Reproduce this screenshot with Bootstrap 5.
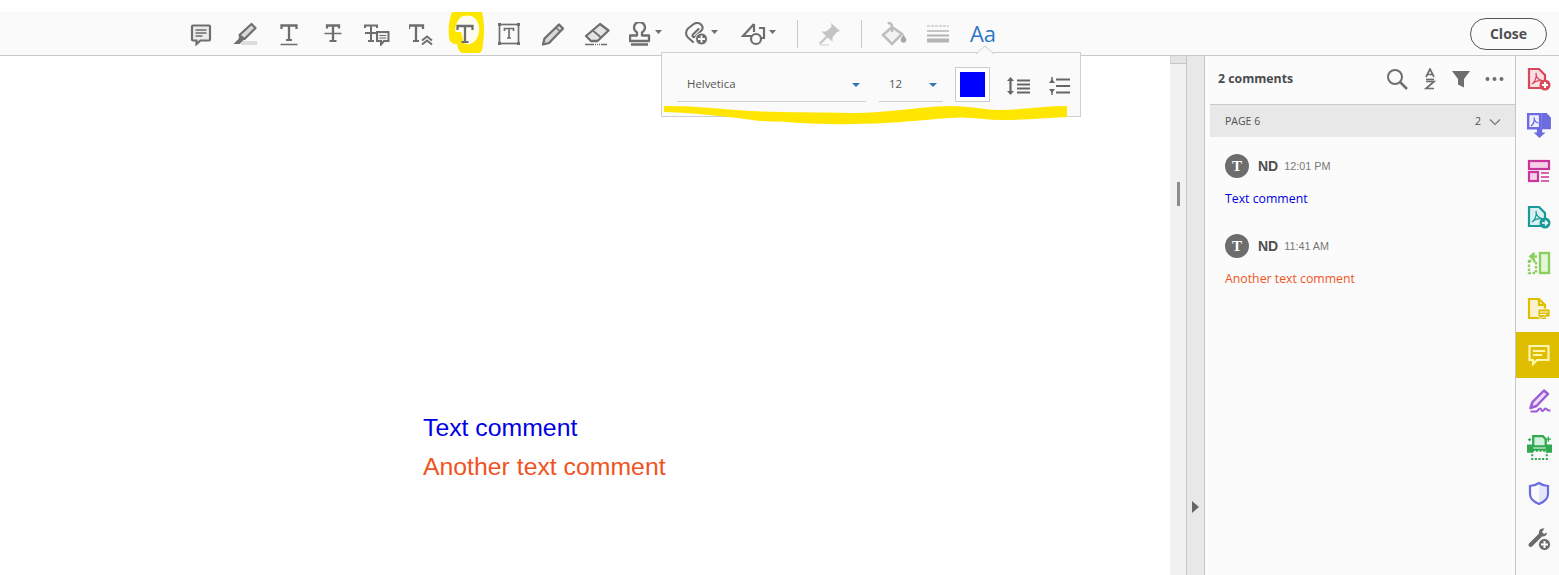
<!doctype html>
<html lang="en">
<head>
<meta charset="utf-8">
<title>Comments</title>
<link href="https://cdn.jsdelivr.net/npm/bootstrap@5.3.0/dist/css/bootstrap.min.css" rel="stylesheet">
<style>
html,body{height:575px;overflow:hidden;background:#fff}
body{font-family:"Open Sans","Noto Sans",sans-serif;color:#505050;position:relative}
.top-strip{height:12px;background:#fff}
.tool-bar{height:44px;background:#fafafa;border-bottom:1px solid #c9c9c9;padding-left:179px}
.tool-btn{width:44px;height:43px;flex:none}
.tool-wide{height:43px;flex:none;padding-left:10px}
.w-stamp{width:56px}.w-clip{width:60px}.w-shape{width:50px;padding-left:6px}
.tool-sep{width:1px;height:28px;background:#c9c9c9;flex:none}
.sp-a{width:12px;flex:none}.sp-b{width:9px;flex:none}.sp-c{width:10px;flex:none}
.tool-aa{font-size:22px;line-height:1;color:#2f77c4;font-weight:500;font-family:"Open Sans",sans-serif;width:44px;text-align:center;flex:none;padding-left:2px;margin-top:-1px}
.close-btn{--bs-btn-padding-y:0;--bs-btn-padding-x:0;width:77px;height:32px;border:1px solid #555;border-radius:16px;background:#fbfbfb;color:#505050;font-weight:700;font-size:14px;line-height:28px;margin-right:12px}
.work-area{height:519px}
.doc-page{width:1170px;flex:none;background:#fff;padding:352px 0 0 423px;font-family:"Liberation Sans",Arial,sans-serif;font-size:24.8px;line-height:39px}
.ink-blue{color:#0000e6}.ink-orange{color:#f0541e}
.scroll-col{width:17px;flex:none;background:#f1f1f1;border-right:1px solid #c6c6c6}
.scroll-cap{height:8px;background:#e4e4e4;border-bottom:1px solid #c6c6c6;border-left:1px solid #d4d4d4}
.grip{width:3px;height:24px;background:#8c8c8c;margin:118px 0 0 7px}
.split-col{width:18px;flex:none;background:#e8e8e8;border-right:1px solid #c6c6c6;padding-top:445px;padding-left:5px}
.split-arrow{width:0;height:0;border-left:7px solid #666;border-top:6px solid transparent;border-bottom:6px solid transparent}
.side-panel{width:311px;flex:none;background:#fbfbfb;border-right:1px solid #c6c6c6}
.panel-head{height:48px;padding:0 11px 2px 13px}
.panel-title{font-weight:700;font-size:12.3px;color:#4b4b4b}
.head-tools{gap:15px}
.page-band{height:33px;margin-left:5px;background:#e8e8e8;border-top:1px solid #c9c9c9;padding:1px 14px 0 15px;font-size:10.5px;color:#505050}
.note{padding:17px 0 0 20px;height:80px}
.note-ava{width:24px;height:24px;border-radius:50%;background:#6d6d6d;color:#fff;font-family:"Liberation Serif",serif;font-weight:700;font-size:15px;line-height:24px;text-align:center;flex:none}
.note-name{font-family:"Liberation Sans",sans-serif;font-weight:700;font-size:14px;color:#4f4f4f;margin-left:9px}
.note-time{font-family:"Liberation Sans",sans-serif;font-size:10.8px;color:#777;margin-left:6px}
.note-body{font-size:12.3px;line-height:16px;margin-top:13px}
.rail{width:43px;flex:none;background:#fafafa}
.rail-item{height:46px;padding-left:3px}
.rail-on{background:#dfbd00}
.fmt-pop{position:absolute;left:661px;top:52px;width:420px;height:65px;background:#fafafa;border:1px solid #cfcfcf;padding:14px 0 0 15px}
.fmt-notch{position:absolute;left:313px;top:-8px}
.fmt-sel{height:35px;border-bottom:1px solid #cfcfcf;font-size:11.4px;color:#555;padding-left:10px;flex:none}
.sel-a{width:189px;margin-right:13px}.sel-b{width:64px;margin-right:12px}
.sel-caret{width:0;height:0;border-top:4px solid #2f77b4;border-left:4px solid transparent;border-right:4px solid transparent;margin-right:6px;margin-top:2px}
.swatch{width:35px;height:35px;border:1px solid #ccc;padding:4px;flex:none;background:#fff}
.swatch-in{width:100%;height:100%;background:#0000ff}
.fmt-i1{margin:9px 0 0 17px}.fmt-i2{margin:9px 0 0 19px}
.scribble{position:absolute;left:0;top:0;pointer-events:none}
.blob{position:absolute;left:6px;top:0;overflow:visible}
.ic{display:block;flex:none}
</style>
</head>
<body>
<div class="top-strip"></div>
<div class="tool-bar d-flex align-items-center">
  <div class="tool-btn d-flex align-items-center justify-content-center"><svg class="ic" width="24" height="24" viewBox="0 0 24 24" fill="none" stroke="#6e6e6e" stroke-width="2.200"><path d="M4 3.500h16a1 1 0 0 1 1 1v13a1 1 0 0 1-1 1H11.500L7.500 22v-3.500H4a1 1 0 0 1-1-1v-13a1 1 0 0 1 1-1z" fill="#ececec"/><path d="M6.500 8h11M6.500 11h11M6.500 14h7" stroke-width="1.500"/></svg></div>
  <div class="tool-btn d-flex align-items-center justify-content-center"><svg class="ic" width="24" height="24" viewBox="0 0 24 24" fill="none"><rect x="8" y="19" width="16" height="4" fill="#dcdcdc"/><path d="M18.500 2l4 4-11 11-5-4z" fill="#d8d8d8" stroke="#6e6e6e" stroke-width="2.200" stroke-linejoin="round"/><path d="M6.500 13l-1 4-5 5h6l5-5z" fill="#6e6e6e"/></svg></div>
  <div class="tool-btn d-flex align-items-center justify-content-center"><svg class="ic" width="24" height="24" viewBox="0 0 24 24" fill="none" stroke="#6e6e6e" stroke-width="2"><path d="M4.500 7V3.500h15V7M12 3.500V18" stroke-width="2.300"/><path d="M9 18h6" stroke-width="2"/><path d="M3.500 22.500h17" stroke-width="1.500"/></svg></div>
  <div class="tool-btn d-flex align-items-center justify-content-center"><svg class="ic" width="24" height="24" viewBox="0 0 24 24" fill="none" stroke="#6e6e6e" stroke-width="2"><path d="M6 6.500V3.500h12v3M12 3.500V19" stroke-width="2.300"/><path d="M8.500 19h7" stroke-width="2"/><path d="M3.500 11.500h17" stroke-width="1.500"/></svg></div>
  <div class="tool-btn d-flex align-items-center justify-content-center"><svg class="ic" width="26" height="24" viewBox="0 0 26 24" fill="none" stroke="#6e6e6e" stroke-width="2"><path d="M1 6V3.500h12V6M7 3.500V19M4 19h6M1 11h11" stroke-width="2"/><path d="M13 10h11.500v9h-4.500l-3 3.500V19h-4z" fill="#ececec" stroke-width="2"/><path d="M15.500 13.500h6.500M15.500 16h6.500" stroke-width="1.200"/></svg></div>
  <div class="tool-btn d-flex align-items-center justify-content-center"><svg class="ic" width="24" height="24" viewBox="0 0 24 24" fill="none" stroke="#6e6e6e" stroke-width="2"><path d="M0 7V3.500h14V7M7 3.500V19" stroke-width="2.300"/><path d="M4 19h6" stroke-width="2"/><path d="M13 18.500l5-4 5 4M13 22.500l5-4 5 4" stroke-width="2"/></svg></div>
  <div class="tool-btn d-flex align-items-center justify-content-center position-relative"><svg class="blob" width="35" height="41" viewBox="0 0 35 41"><path d="M3 0H33C35 8 36 20 34 30C34 36 33 41 30 41H14C10 41 9 36 8 32C3 32 1 30 0 26C-1 16 0 8 3 0z" fill="#ffe600"/><path d="M14 4C22 2 28 5 30 14C31 20 29 26 26 29C22 33 18 33 15 31C13 27 14 24 12 20C8 20 6 20 6 18C7 12 9 6 14 4z" fill="#fdfcef"/></svg><svg class="ic position-relative" width="20" height="22" viewBox="0 0 20 22" fill="none" stroke="#6e6e6e" stroke-width="2"><path d="M2.500 7V3h15v4M10 3v16" stroke-width="2.300"/><path d="M6.500 19h7"/></svg></div>
  <div class="tool-btn d-flex align-items-center justify-content-center"><svg class="ic" width="24" height="24" viewBox="0 0 24 24" fill="none" stroke="#6e6e6e"><rect x="2.500" y="2.500" width="19" height="19" stroke-width="1.700"/><path d="M1 1h3v3H1zM20 1h3v3h-3zM1 20h3v3H1zM20 20h3v3h-3z" fill="#6e6e6e" stroke="none"/><path d="M7.500 9V6.500h9V9M12 6.500V16M10 16h4" stroke-width="1.700"/></svg></div>
  <div class="tool-btn d-flex align-items-center justify-content-center"><svg class="ic" width="24" height="24" viewBox="0 0 24 24" fill="none"><path d="M18 2.500l4 4L8 21l-6 1.500L3.500 16.500z" fill="#d8d8d8" stroke="#6e6e6e" stroke-width="2.300" stroke-linejoin="round"/><path d="M15 5.500l4 4" stroke="#6e6e6e" stroke-width="1.500"/></svg></div>
  <div class="tool-btn d-flex align-items-center justify-content-center"><svg class="ic" width="26" height="24" viewBox="0 0 26 24" fill="none"><path d="M16 2l8.500 6.500L13.500 19H7l-5-5z" fill="#e4e4e4" stroke="#6e6e6e" stroke-width="2.300" stroke-linejoin="round"/><path d="M8 8l8.500 7" stroke="#6e6e6e" stroke-width="1.800"/><path d="M1 22.500h22" stroke="#6e6e6e" stroke-dasharray="9 1 1 1 1 1 1 1" stroke-width="1.300"/></svg></div>
  <div class="tool-wide w-stamp d-flex align-items-center"><svg class="ic" width="34" height="24" viewBox="0 0 34 24" fill="none" stroke="#6e6e6e" stroke-width="2.300"><path d="M8 10.500C6 9 5 7.500 5 5.500a5.500 5.500 0 0 1 11 0c0 2-1 3.500-3 5V13.500h7V19H1v-5.500h7z" stroke-linejoin="round"/><path d="M2 22.500h17" stroke-width="2.500"/><path d="M26 8h7l-3.500 4z" fill="#6e6e6e" stroke="none"/></svg></div>
  <div class="tool-wide w-clip d-flex align-items-center"><svg class="ic" width="34" height="24" viewBox="0 0 34 24" fill="none" stroke="#6e6e6e" stroke-width="2.100"><path d="M8 20L3 15.500C0 12.500 1 8.500 3 6.500L8 2.500C11 .5 14 .5 16 2.500C18 4.500 18 7 16 9L10.500 14.500C8.500 16 6.500 14 8 12.500L13.500 7" stroke-linecap="round"/><circle cx="16.500" cy="17" r="6" fill="#6e6e6e" stroke="#fafafa" stroke-width="1"/><path d="M13 17h7M16.500 13.500v7" stroke="#fff" stroke-width="1.800"/><path d="M26 8h7l-3.500 4z" fill="#6e6e6e" stroke="none"/></svg></div>
  <div class="tool-wide w-shape d-flex align-items-center"><svg class="ic" width="36" height="24" viewBox="0 0 36 24" fill="none" stroke="#6e6e6e" stroke-width="2.200"><path d="M13 2L2 14h9M13 2v8M18 6h5v10h-3"/><circle cx="15" cy="17" r="5"/><path d="M28 8h7l-3.500 4z" fill="#6e6e6e" stroke="none"/></svg></div>
  <div class="sp-a"></div><div class="tool-sep"></div><div class="sp-b"></div>
  <div class="tool-btn d-flex align-items-center justify-content-center"><svg class="ic" width="24" height="24" viewBox="0 0 24 24"><path d="M14 1l9 8-3 1-4.500 5.500 0 4-5-4-7 7-1.500-1.500 7-7-4.500-4.500h4.500l5.500-4.500z" fill="#c4c4c4"/><path d="M3 23h9" stroke="#dcdcdc" stroke-width="1.500"/></svg></div>
  <div class="sp-c"></div><div class="tool-sep"></div><div class="sp-c"></div>
  <div class="tool-btn d-flex align-items-center justify-content-center"><svg class="ic" width="26" height="26" viewBox="0 0 26 26" fill="none" stroke="#bdbdbd" stroke-width="2.500"><path d="M11 6L2 14l9 9 10-10z" fill="#f3f3f3"/><path d="M7 3c3-3 5 2 4 8"/><circle cx="22.500" cy="19" r="2.800" fill="#a8a8a8" stroke="none"/><path d="M22.500 13.500l-2.600 4.500h5.200z" fill="#a8a8a8" stroke="none"/></svg></div>
  <div class="tool-btn d-flex align-items-center justify-content-center"><svg class="ic" width="22" height="18" viewBox="0 0 22 18" fill="none" stroke="#b4b4b4"><path d="M0 1h22" stroke-dasharray="3 1"/><path d="M0 6h22" stroke-width="1.500"/><path d="M0 10.500h22" stroke-width="2"/><path d="M0 15.500h22" stroke-width="4"/></svg></div>
  <div class="tool-aa">Aa</div>
  <button type="button" class="btn close-btn ms-auto">Close</button>
</div>
<div class="work-area d-flex">
  <div class="doc-page">
    <div class="ink-blue">Text comment</div>
    <div class="ink-orange">Another text comment</div>
  </div>
  <div class="scroll-col"><div class="scroll-cap"></div><div class="grip"></div></div>
  <div class="split-col"><div class="split-arrow"></div></div>
  <div class="side-panel d-flex flex-column">
    <div class="panel-head d-flex align-items-center">
      <span class="panel-title">2 comments</span>
      <div class="head-tools ms-auto d-flex align-items-center">
        <svg class="ic" width="22" height="22" viewBox="0 0 22 22" fill="none" stroke="#6e6e6e" stroke-width="2"><circle cx="9" cy="9" r="7"/><path d="M14 14l7 7" stroke-width="2.500"/></svg>
        <svg class="ic" width="14" height="22" viewBox="0 0 14 22" fill="none" stroke="#6e6e6e" stroke-width="1.700"><path d="M3 9l4-8 4 8M4.500 6.500h5"/><path d="M3 11.500h8"/><path d="M3 13.500h8L3 20.500h8"/></svg>
        <svg class="ic" width="18" height="18" viewBox="0 0 18 18"><path d="M0 1h18l-6 8v8.500l-6-3V9z" fill="#6e6e6e"/></svg>
        <svg class="ic" width="19" height="6" viewBox="0 0 19 6" fill="#6e6e6e"><circle cx="2.500" cy="3" r="2"/><circle cx="9.500" cy="3" r="2"/><circle cx="16.500" cy="3" r="2"/></svg>
      </div>
    </div>
    <div class="page-band d-flex align-items-center">
      <span>PAGE 6</span><span class="ms-auto">2</span>
      <svg class="ic ms-2" width="12" height="8" viewBox="0 0 12 8" fill="none" stroke="#777" stroke-width="1.200"><path d="M1 1.500l5 5 5-5"/></svg>
    </div>
    <div class="note">
      <div class="d-flex align-items-center"><div class="note-ava">T</div><span class="note-name">ND</span><span class="note-time">12:01 PM</span></div>
      <div class="note-body ink-blue">Text comment</div>
    </div>
    <div class="note">
      <div class="d-flex align-items-center"><div class="note-ava">T</div><span class="note-name">ND</span><span class="note-time">11:41 AM</span></div>
      <div class="note-body ink-orange">Another text comment</div>
    </div>
  </div>
  <div class="rail">
    <div class="rail-item d-flex align-items-center justify-content-center"><svg class="ic" width="24" height="24" viewBox="0 0 24 24" fill="none" stroke="#d9475a" stroke-width="2.200"><path d="M2 2h10l6 6v13H2z" fill="#f8dfe2"/><path d="M5 17c3-2 5-7 4-11 0 4 3 7 7 8-4-1-8 0-11 3z" stroke-width="1.200"/><circle cx="18" cy="18" r="5.500" fill="#d9475a" stroke="none"/><path d="M15 18h6M18 15v6" stroke="#fff"/></svg></div>
    <div class="rail-item d-flex align-items-center justify-content-center"><svg class="ic" width="26" height="26" viewBox="0 0 24 24" fill="none"><path d="M14 1h5l4 4v11H14z" fill="#6c6ce0"/><path d="M2 2h11v13H2z" fill="#eeeefc" stroke="#6c6ce0" stroke-width="2.200"/><path d="M4.500 13c3-2 3.500-5 3-8 0 3 2 5 4 5" stroke="#6c6ce0" stroke-width="1.200"/><path d="M10 15h5v4h3l-5.500 5L7 19h3z" fill="#6c6ce0"/></svg></div>
    <div class="rail-item d-flex align-items-center justify-content-center"><svg class="ic" width="24" height="24" viewBox="0 0 24 24" fill="none" stroke="#c9359a" stroke-width="2.200"><rect x="2" y="2" width="20" height="8" fill="#f6cfe6"/><rect x="2" y="13" width="9" height="9" fill="#f6cfe6"/><path d="M14 14h8M14 18h8M14 22h8" stroke-width="1.300"/></svg></div>
    <div class="rail-item d-flex align-items-center justify-content-center"><svg class="ic" width="24" height="24" viewBox="0 0 24 24" fill="none" stroke="#1a9a9a" stroke-width="2.200"><path d="M2 2h10l6 6v13H2z" fill="#d9f0f0"/><path d="M5 17c3-2 5-7 4-11 0 4 3 7 7 8-4-1-8 0-11 3z" stroke-width="1.200"/><circle cx="18" cy="18" r="5.500" fill="#1a9a9a" stroke="none"/><path d="M15 18h5M18 15.500l2.500 2.500-2.500 2.500" stroke="#fff" stroke-width="1.500"/></svg></div>
    <div class="rail-item d-flex align-items-center justify-content-center"><svg class="ic" width="24" height="24" viewBox="0 0 24 24" fill="none" stroke="#8bcf5f" stroke-width="2.400"><rect x="13" y="2" width="9" height="20" fill="#e4f5d8"/><path d="M2 10h7v12H2z" stroke-dasharray="2.500 1.500"/><path d="M10 5.500H4M7.500 2L3.500 5.500 7.500 9"/></svg></div>
    <div class="rail-item d-flex align-items-center justify-content-center"><svg class="ic" width="24" height="24" viewBox="0 0 24 24" fill="none" stroke="#dfbd00" stroke-width="2.200"><path d="M2 2h10l6 6v13H2z" fill="#f9f2cd"/><path d="M12 2v6h6"/><path d="M11 12h12v8h-7l-3 3v-3h-2z" fill="#dfbd00" stroke="#fafafa" stroke-width=".8"/><path d="M13 15h8M13 17.500h6" stroke="#fff" stroke-width="1"/></svg></div>
    <div class="rail-item rail-on d-flex align-items-center justify-content-center"><svg class="ic" width="24" height="24" viewBox="0 0 24 24" fill="none" stroke="#fff6b0" stroke-width="2.200"><path d="M2.500 3h19v14H10l-4 4v-4H2.500z"/><path d="M6 8h12M6 12h9" stroke-width="2.200"/></svg></div>
    <div class="rail-item d-flex align-items-center justify-content-center"><svg class="ic" width="25" height="24" viewBox="0 0 24 24" fill="none" stroke="#9b5ad6" stroke-width="2.400"><path d="M16.500 1.500l4 3.500L9 17l-6 2 2-6z" fill="#ebdcf8" stroke-linejoin="round"/><path d="M3 22.500h6c2-1 2-3 3.500-3s1 2.500 2.500 2.500 1.500-2.500 3-2.500 1 2.500 5 2" stroke-width="2"/></svg></div>
    <div class="rail-item d-flex align-items-center justify-content-center"><svg class="ic" width="25" height="25" viewBox="0 0 24 24" fill="none"><path d="M6 1h9l3 3v7H6z" fill="#d5f0dc" stroke="#2fa84f" stroke-width="2.200"/><path d="M0 9h6v4h12V9h6v8H0z" fill="#2fa84f"/><path d="M5 15h14v8H5z" stroke="#2fa84f" stroke-width="2" stroke-dasharray="2 1.500" fill="#fafafa"/><path d="M20.500 1.500v5M18 4h5M2.500 3v3M1 4.500h3" stroke="#2fa84f" stroke-width="1.300"/></svg></div>
    <div class="rail-item d-flex align-items-center justify-content-center"><svg class="ic" width="24" height="24" viewBox="0 0 24 24" fill="none"><path d="M12 2c3 2 6 3 9 3v8c0 5-4 8-9 10z" fill="#e6e6fa"/><path d="M12 2c-3 2-6 3-9 3v8c0 5 4 8 9 10 5-2 9-5 9-10V5c-3 0-6-1-9-3z" stroke="#6a6ae0" stroke-width="2.200"/></svg></div>
    <div class="rail-item d-flex align-items-center justify-content-center"><svg class="ic" width="24" height="24" viewBox="0 0 24 24" fill="none"><path d="M15 1.500c-2.500.500-3.500 3-3 5L2 16.500c-1.500 2 1 4.500 3 3L15 9.500c2.500.500 5-1 5-4l-3 1.500-2-2 2.500-3.500z" fill="#6a6a6a"/><circle cx="17.500" cy="17.500" r="6" fill="#6a6a6a" stroke="#fafafa"/><path d="M14 17.500h7M17.500 14v7" stroke="#fff" stroke-width="2"/></svg></div>
  </div>
</div>
<div class="fmt-pop d-flex align-items-start">
  <svg class="fmt-notch" width="20" height="9" viewBox="0 0 20 9"><path d="M1 9l9-8 9 8" fill="#fafafa" stroke="#cfcfcf"/></svg>
  <div class="fmt-sel sel-a d-flex align-items-center justify-content-between"><span>Helvetica</span><span class="sel-caret"></span></div>
  <div class="fmt-sel sel-b d-flex align-items-center justify-content-between"><span>12</span><span class="sel-caret"></span></div>
  <div class="swatch"><div class="swatch-in"></div></div>
  <svg class="ic fmt-i1" width="23" height="20" viewBox="0 0 23 20" fill="none" stroke="#666"><path d="M3.500 3v14" stroke-width="2.200"/><path d="M0 5l3.500-4L7 5zM0 15l3.500 4L7 15z" fill="#666" stroke="none"/><path d="M10 4.500h13M10 8.500h13M10 12.500h13M10 16.500h13" stroke-width="2"/></svg>
  <svg class="ic fmt-i2" width="21" height="20" viewBox="0 0 21 20" fill="none" stroke="#666"><path d="M7 3.500h14M7 10h14M7 16.500h14" stroke-width="2.200"/><path d="M0 7l3-4 3 4zM0 13l3 4 3-4z" fill="#666" stroke="none"/><path d="M3 1v4M3 15v4" stroke-width="1.500"/></svg>
</div>
<svg class="scribble" width="1559" height="575" viewBox="0 0 1559 575"><path d="M664 106c35 0 55 3 86 5 35 2 60 1 100 2 40 0 65-6 100-7 20 0 35 4 50 4 20 0 45-4 67-4v11c-22 1-42 3-65 3-17 0-33-4-52-2-40 3-65 6-100 6-30 1-55-2-90-3-30-4-60-8-96-9z" fill="#ffe600"/></svg>
<script src="https://cdn.jsdelivr.net/npm/bootstrap@5.3.0/dist/js/bootstrap.bundle.min.js"></script>
</body>
</html>
